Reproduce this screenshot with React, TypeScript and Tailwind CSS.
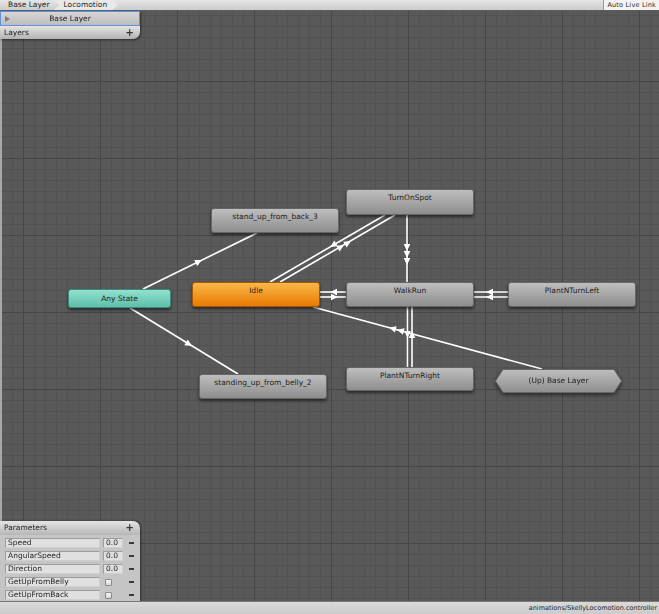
import React from "react";

type Kind = "gray" | "idle" | "any";
type StateNode = { label: string; x: number; y: number; w: number; h: number; kind: Kind };

const TOP = 11;

const nodes: StateNode[] = [
  { label: "stand_up_from_back_3", x: 211, y: 208, w: 128, h: 25, kind: "gray" },
  { label: "TurnOnSpot", x: 346, y: 189, w: 128, h: 26, kind: "gray" },
  { label: "Any State", x: 68, y: 289, w: 103, h: 19, kind: "any" },
  { label: "Idle", x: 192, y: 282, w: 128, h: 25, kind: "idle" },
  { label: "WalkRun", x: 346, y: 282, w: 128, h: 25, kind: "gray" },
  { label: "PlantNTurnLeft", x: 508, y: 282, w: 128, h: 25, kind: "gray" },
  { label: "standing_up_from_belly_2", x: 199, y: 374, w: 128, h: 25, kind: "gray" },
  { label: "PlantNTurnRight", x: 346, y: 367, w: 128, h: 24, kind: "gray" },
];

const lines: [number, number, number, number][] = [
  [143, 289, 257, 233],
  [130, 308, 238, 374],
  [270, 282, 385, 215],
  [280, 282, 395, 215],
  [407, 215, 407, 282],
  [320, 292, 346, 292],
  [320, 297, 346, 297],
  [474, 292, 508, 292],
  [474, 297, 508, 297],
  [407.5, 307, 407.5, 367],
  [412, 307, 412, 367],
  [313, 307, 542, 369],
];

const heads: [number, number, number, number][] = [
  [202, 260, 114, -56],
  [192, 346, 108, 66],
  [330, 247, -115, 67],
  [344, 245, 115, -67],
  [351, 241, 115, -67],
  [407, 251, 0, 1],
  [407, 258, 0, 1],
  [407, 265, 0, 1],
  [330, 292, -1, 0],
  [338, 297, 1, 0],
  [486, 292, -1, 0],
  [486, 297, -1, 0],
  [407.5, 338, 0, 1],
  [412, 331, 0, -1],
  [389, 327.6, -229, -62],
  [397, 329.7, -229, -62],
];

const params = [
  { name: "Speed", value: "0.0" },
  { name: "AngularSpeed", value: "0.0" },
  { name: "Direction", value: "0.0" },
  { name: "GetUpFromBelly", value: null },
  { name: "GetUpFromBack", value: null },
];

function Head({ x, y, dx, dy }: { x: number; y: number; dx: number; dy: number }) {
  const l = Math.hypot(dx, dy);
  const ux = dx / l;
  const uy = dy / l;
  const bx = x - ux * 7;
  const by = y - uy * 7;
  const nx = -uy * 3.3;
  const ny = ux * 3.3;
  return <polygon points={`${x},${y} ${bx + nx},${by + ny} ${bx - nx},${by - ny}`} fill="#ffffff" />;
}

function NodeBox({ n }: { n: StateNode }) {
  const skin =
    n.kind === "idle"
      ? "bg-[linear-gradient(#fcb848,#e97a02)] border-[#a65800]"
      : n.kind === "any"
        ? "bg-[linear-gradient(#90e2cf,#5fbfa9)] border-[#3f8a7a] items-center"
        : "bg-[linear-gradient(#bebebe,#8e8e8e)] border-[#666666]";
  return (
    <div
      className={`absolute flex justify-center rounded-[3px] border shadow-[0_2px_3px_rgba(0,0,0,0.55)] text-[7.5px] leading-[10px] text-[#1e1e1e] ${skin} ${
        n.kind === "any" ? "" : "pt-[3px]"
      }`}
      style={{ left: n.x, top: n.y - TOP, width: n.w, height: n.h }}
    >
      {n.label}
    </div>
  );
}

export default function App() {
  return (
    <div className="flex h-[614px] w-[659px] flex-col overflow-hidden bg-[#595959] font-['DejaVu_Sans',sans-serif] text-[#1e1e1e]">
      {/* breadcrumb bar */}
      <div className="flex h-[11px] shrink-0 items-stretch border-b border-[#5c5c5c] bg-[linear-gradient(#e6e6e6,#cdcdcd)] text-[7.5px] leading-[10px]">
        <div className="flex items-center pl-[8px] pr-[6px]">Base Layer</div>
        <div className="-ml-[2px] flex items-center bg-[#e9e9e9] pl-[10px] pr-[11px] [clip-path:polygon(0_0,calc(100%-6px)_0,100%_50%,calc(100%-6px)_100%,0_100%,6px_50%)]">
          Locomotion
        </div>
        <div className="ml-auto flex items-center border-l border-[#9a9a9a] bg-[#f3f3f3] px-[3px] text-[6.5px] tracking-[0.2px]">
          Auto Live Link
        </div>
      </div>

      {/* graph canvas */}
      <div className="relative flex-1 overflow-hidden bg-[#595959] bg-[linear-gradient(to_right,#474747_1px,transparent_1px),linear-gradient(to_bottom,#474747_1px,transparent_1px),linear-gradient(to_right,#525252_1px,transparent_1px),linear-gradient(to_bottom,#525252_1px,transparent_1px)] bg-[size:77px_77px,77px_77px,11px_11px,11px_11px] bg-[position:23px_70px,23px_70px,1px_4px,1px_4px]">
        <div className="absolute inset-y-0 left-0 w-[2px] bg-[#a8a8a8]" />

        <svg className="absolute left-0 top-0" width={659} height={590} viewBox="0 11 659 590">
          {lines.map(([x1, y1, x2, y2], i) => (
            <line key={i} x1={x1} y1={y1} x2={x2} y2={y2} stroke="#ffffff" strokeWidth={1.6} />
          ))}
          {heads.map(([x, y, dx, dy], i) => (
            <Head key={i} x={x} y={y} dx={dx} dy={dy} />
          ))}
        </svg>

        {nodes.map((n) => (
          <NodeBox key={n.label} n={n} />
        ))}

        {/* (Up) Base Layer hexagon */}
        <div className="absolute left-[495px] top-[358px] flex h-[24px] w-[127px] items-center justify-center text-[7.5px] leading-[10px] drop-shadow-[0_2px_2px_rgba(0,0,0,0.55)]">
          <svg className="absolute inset-0" width={127} height={24} viewBox="0 0 127 24">
            <defs>
              <linearGradient id="hex" x1="0" y1="0" x2="0" y2="1">
                <stop offset="0" stopColor="#bebebe" />
                <stop offset="1" stopColor="#8e8e8e" />
              </linearGradient>
            </defs>
            <polygon points="0.5,12 8,0.5 119,0.5 126.5,12 119,23.5 8,23.5" fill="url(#hex)" stroke="#666666" strokeWidth={1} />
          </svg>
          <span className="relative">(Up) Base Layer</span>
        </div>

        {/* Layers panel */}
        <div className="absolute left-0 top-0 w-[140px] text-[7.5px] leading-[10px] drop-shadow-[1px_1px_1px_rgba(0,0,0,0.5)]">
          <div className="relative flex h-[15px] items-center justify-center border border-[#5e92da] bg-[linear-gradient(#d6d6d6,#bdbdbd)]">
            <svg className="absolute left-[4px] top-[4px]" width={5} height={6} viewBox="0 0 5 6">
              <polygon points="0,0 5,3 0,6" fill="#7d7d7d" />
            </svg>
            Base Layer
          </div>
          <div className="flex h-[13px] items-center justify-between rounded-br-[7px] bg-[linear-gradient(#e4e4e4,#b3b3b3)] pl-[4px] pr-[6px]">
            <span>Layers</span>
            <span className="text-[10px] font-bold leading-[10px] text-[#333]">+</span>
          </div>
        </div>

        {/* Parameters panel */}
        <div className="absolute bottom-0 left-0 flex h-[80px] w-[140px] flex-col text-[7.5px] leading-[10px] drop-shadow-[1px_0_1px_rgba(0,0,0,0.5)]">
          <div className="flex h-[14px] items-center justify-between rounded-tr-[7px] bg-[linear-gradient(#e4e4e4,#b6b6b6)] pl-[4px] pr-[6px]">
            <span>Parameters</span>
            <span className="text-[10px] font-bold leading-[10px] text-[#333]">+</span>
          </div>
          <div className="flex flex-1 flex-col gap-[3px] bg-[#c5c5c5] pt-[3px]">
            {params.map((p) => (
              <div key={p.name} className="flex h-[10px] items-center pl-[5px]">
                <div className="flex h-[10px] w-[95px] items-center border border-[#9c9c9c] border-b-[#d0d0d0] border-r-[#d0d0d0] bg-[#e0e0e0] pl-[2px]">
                  {p.name}
                </div>
                <div className="ml-[3px] flex h-[10px] w-[20px] items-center">
                  {p.value ? (
                    <div className="flex h-[10px] w-[20px] items-center border border-[#9c9c9c] border-b-[#d0d0d0] border-r-[#d0d0d0] bg-[#e0e0e0] pl-[2px]">
                      {p.value}
                    </div>
                  ) : (
                    <div className="ml-[2px] h-[7px] w-[7px] rounded-[1px] border border-[#8a8a8a] bg-[linear-gradient(#f6f6f6,#d6d6d6)]" />
                  )}
                </div>
                <div className="ml-[6px] h-[1.5px] w-[5px] bg-[#3a3a3a]" />
              </div>
            ))}
          </div>
        </div>
      </div>

      {/* status bar */}
      <div className="flex h-[13px] shrink-0 items-center justify-end border-t border-[#7a7a7a] bg-[linear-gradient(#dadada,#cbcbcb)] pr-[2px] text-[6.5px] leading-[10px]">
        animations/SkellyLocomotion.controller
      </div>
    </div>
  );
}
